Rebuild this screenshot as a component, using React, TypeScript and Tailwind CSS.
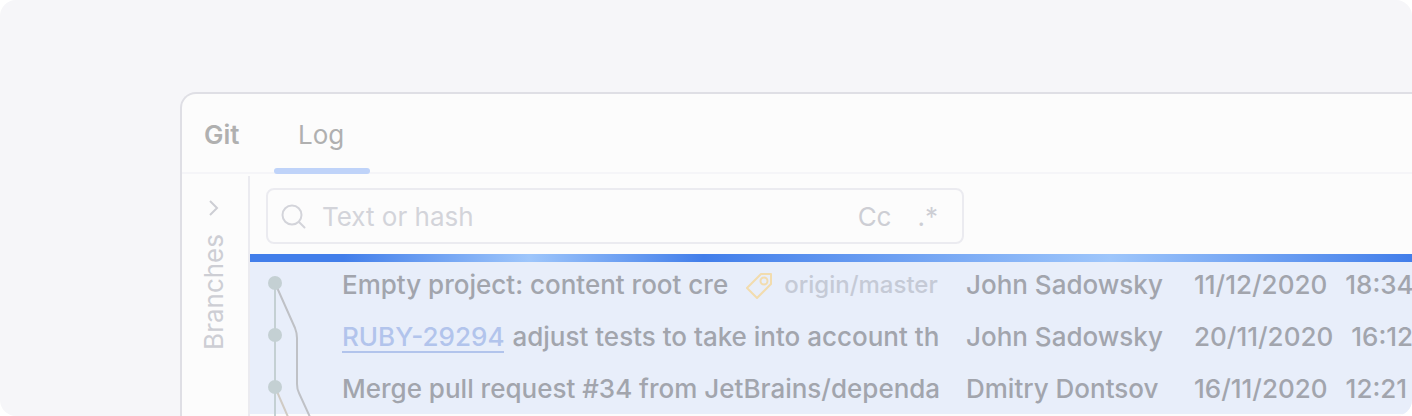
interface Commit {
  id: string;
  ticket?: string;
  message: string;
  tag?: string;
  author: string;
  date: string;
  time: string;
}

const COMMITS: Commit[] = [
  { id: "c1", message: "Empty project: content root cre", tag: "origin/master", author: "John Sadowsky", date: "11/12/2020", time: "18:34" },
  { id: "c2", ticket: "RUBY-29294", message: "adjust tests to take into account th", author: "John Sadowsky", date: "20/11/2020", time: "16:12" },
  { id: "c3", message: "Merge pull request #34 from JetBrains/dependa", author: "Dmitry Dontsov", date: "16/11/2020", time: "12:21" },
];

function SearchIcon() {
  return (
    <svg width="26" height="26" viewBox="0 0 26 26" fill="none" stroke="#d3d4da" strokeWidth="2" strokeLinecap="round">
      <circle cx="11" cy="12" r="9.5" />
      <path d="M18 19l5.5 5.5" />
    </svg>
  );
}

function TagIcon() {
  return (
    <svg width="26" height="26" viewBox="0 0 26 26" fill="none" stroke="#f2dcae" strokeWidth="2" strokeLinejoin="round" className="mb-0.5 shrink-0">
      <path d="M15 1h10v10L11 25 1 15z" />
      <circle cx="18" cy="8" r="3.5" />
    </svg>
  );
}

function CommitGraph() {
  return (
    <svg width="92" height="156" viewBox="0 0 92 156" fill="none" strokeWidth="2" className="block overflow-visible">
      <path d="M25 25l20 45q2 5 2 10v46q0 5 2 9l16 35" stroke="#bfc1c6" />
      <path d="M25 129l20 46" stroke="#d0cbc4" />
      <path d="M25 25v150" stroke="#c4d0d3" />
      <circle cx="25" cy="25" r="7" fill="#c4d0d3" />
      <circle cx="25" cy="77" r="7" fill="#c4d0d3" />
      <circle cx="25" cy="129" r="7" fill="#c4d0d3" />
    </svg>
  );
}

function Header() {
  return (
    <header className="flex h-20 items-stretch border-b-2 border-[#f5f5f8] pl-[22px] text-[#b0b0b0]">
      <h1 className="flex w-[70px] items-center pt-1 font-semibold">Git</h1>
      <button type="button" className="relative w-24 pt-1 pl-6 text-left">
        Log
        <span className="absolute inset-x-0 -bottom-0.5 h-1.5 rounded-full bg-[#bfd3f9]" />
      </button>
    </header>
  );
}

function Sidebar() {
  return (
    <aside className="mt-0.5 w-[68px] shrink-0 border-r-2 border-[#ebebf0]">
      <button type="button" className="flex w-full flex-col items-center gap-[18px] pt-6 pr-0.5 text-[#cdced4]">
        <svg width="10" height="16" viewBox="0 0 10 16" fill="none" stroke="currentColor" strokeWidth="2">
          <path d="M1 1l7 7-7 7" />
        </svg>
        <span className="rotate-180 leading-8 [writing-mode:vertical-rl]">Branches</span>
      </button>
    </aside>
  );
}

function SearchBar() {
  return (
    <div className="px-4 pt-3.5 pb-2.5">
      <div className="flex h-14 max-w-[698px] items-center rounded-lg border-2 border-[#ebebf0] pr-6 pl-[13px] text-[#cdced4]">
        <SearchIcon />
        <input
          type="text"
          aria-label="Text or hash"
          placeholder="Text or hash"
          className="ml-[15px] min-w-0 flex-1 bg-transparent pt-0.5 outline-none placeholder:text-[#d3d4da]"
        />
        <button type="button" aria-label="Match case" className="pt-0.5">Cc</button>
        <button type="button" aria-label="Regex" className="ml-[26px] pt-0.5">.*</button>
      </div>
    </div>
  );
}

function CommitTable() {
  return (
    <table className="w-full table-fixed bg-[#e8eefa] text-left font-medium text-[#a2a5ad]">
      <colgroup>
        <col className="w-[92px]" />
        <col className="w-[624px]" />
        <col className="w-[228px]" />
        <col />
      </colgroup>
      <tbody>
        {COMMITS.map((c, i) => (
          <tr key={c.id} className="h-[52px] whitespace-nowrap">
            {i === 0 && (
              <td rowSpan={COMMITS.length} className="p-0">
                <CommitGraph />
              </td>
            )}
            <td className="p-0 pt-0.5">
              <div className="flex items-center">
                {c.ticket && (
                  <a href="#ticket" className="mr-2 border-b-2 border-[#b2c4ec] pt-0.5 leading-7 text-[#b2c4ec]">{c.ticket}</a>
                )}
                <span>{c.message}</span>
                {c.tag && (
                  <span className="ml-[18px] flex items-end gap-3 text-2xl leading-8 text-[#c5cad6]">
                    <TagIcon />
                    {c.tag}
                  </span>
                )}
              </div>
            </td>
            <td className="p-0 pt-0.5">{c.author}</td>
            <td className="p-0 pt-0.5">
              <div className="flex gap-[18px]">
                <span>{c.date}</span>
                <span>{c.time}</span>
              </div>
            </td>
          </tr>
        ))}
      </tbody>
    </table>
  );
}

export default function App() {
  return (
    <div className="flex min-h-screen overflow-hidden rounded-2xl bg-[#f6f6f9] pt-[92px] pl-[180px] font-['Inter',sans-serif] text-[26px] leading-8">
      <div className="flex min-w-0 flex-1 flex-col rounded-tl-2xl border-t-2 border-l-2 border-[#dfdfe5] bg-[#fcfcfc]">
        <Header />
        <div className="flex min-h-0 flex-1">
          <Sidebar />
          <main className="min-w-0 flex-1 overflow-hidden">
            <SearchBar />
            <div className="relative -mb-1 h-2 bg-[linear-gradient(90deg,#427eea_0%,#427eea_8%,#9ec6fb_24%,#427eea_39%,#9ec6fb_74%,#427eea_100%)]" />
            <CommitTable />
          </main>
        </div>
      </div>
    </div>
  );
}
